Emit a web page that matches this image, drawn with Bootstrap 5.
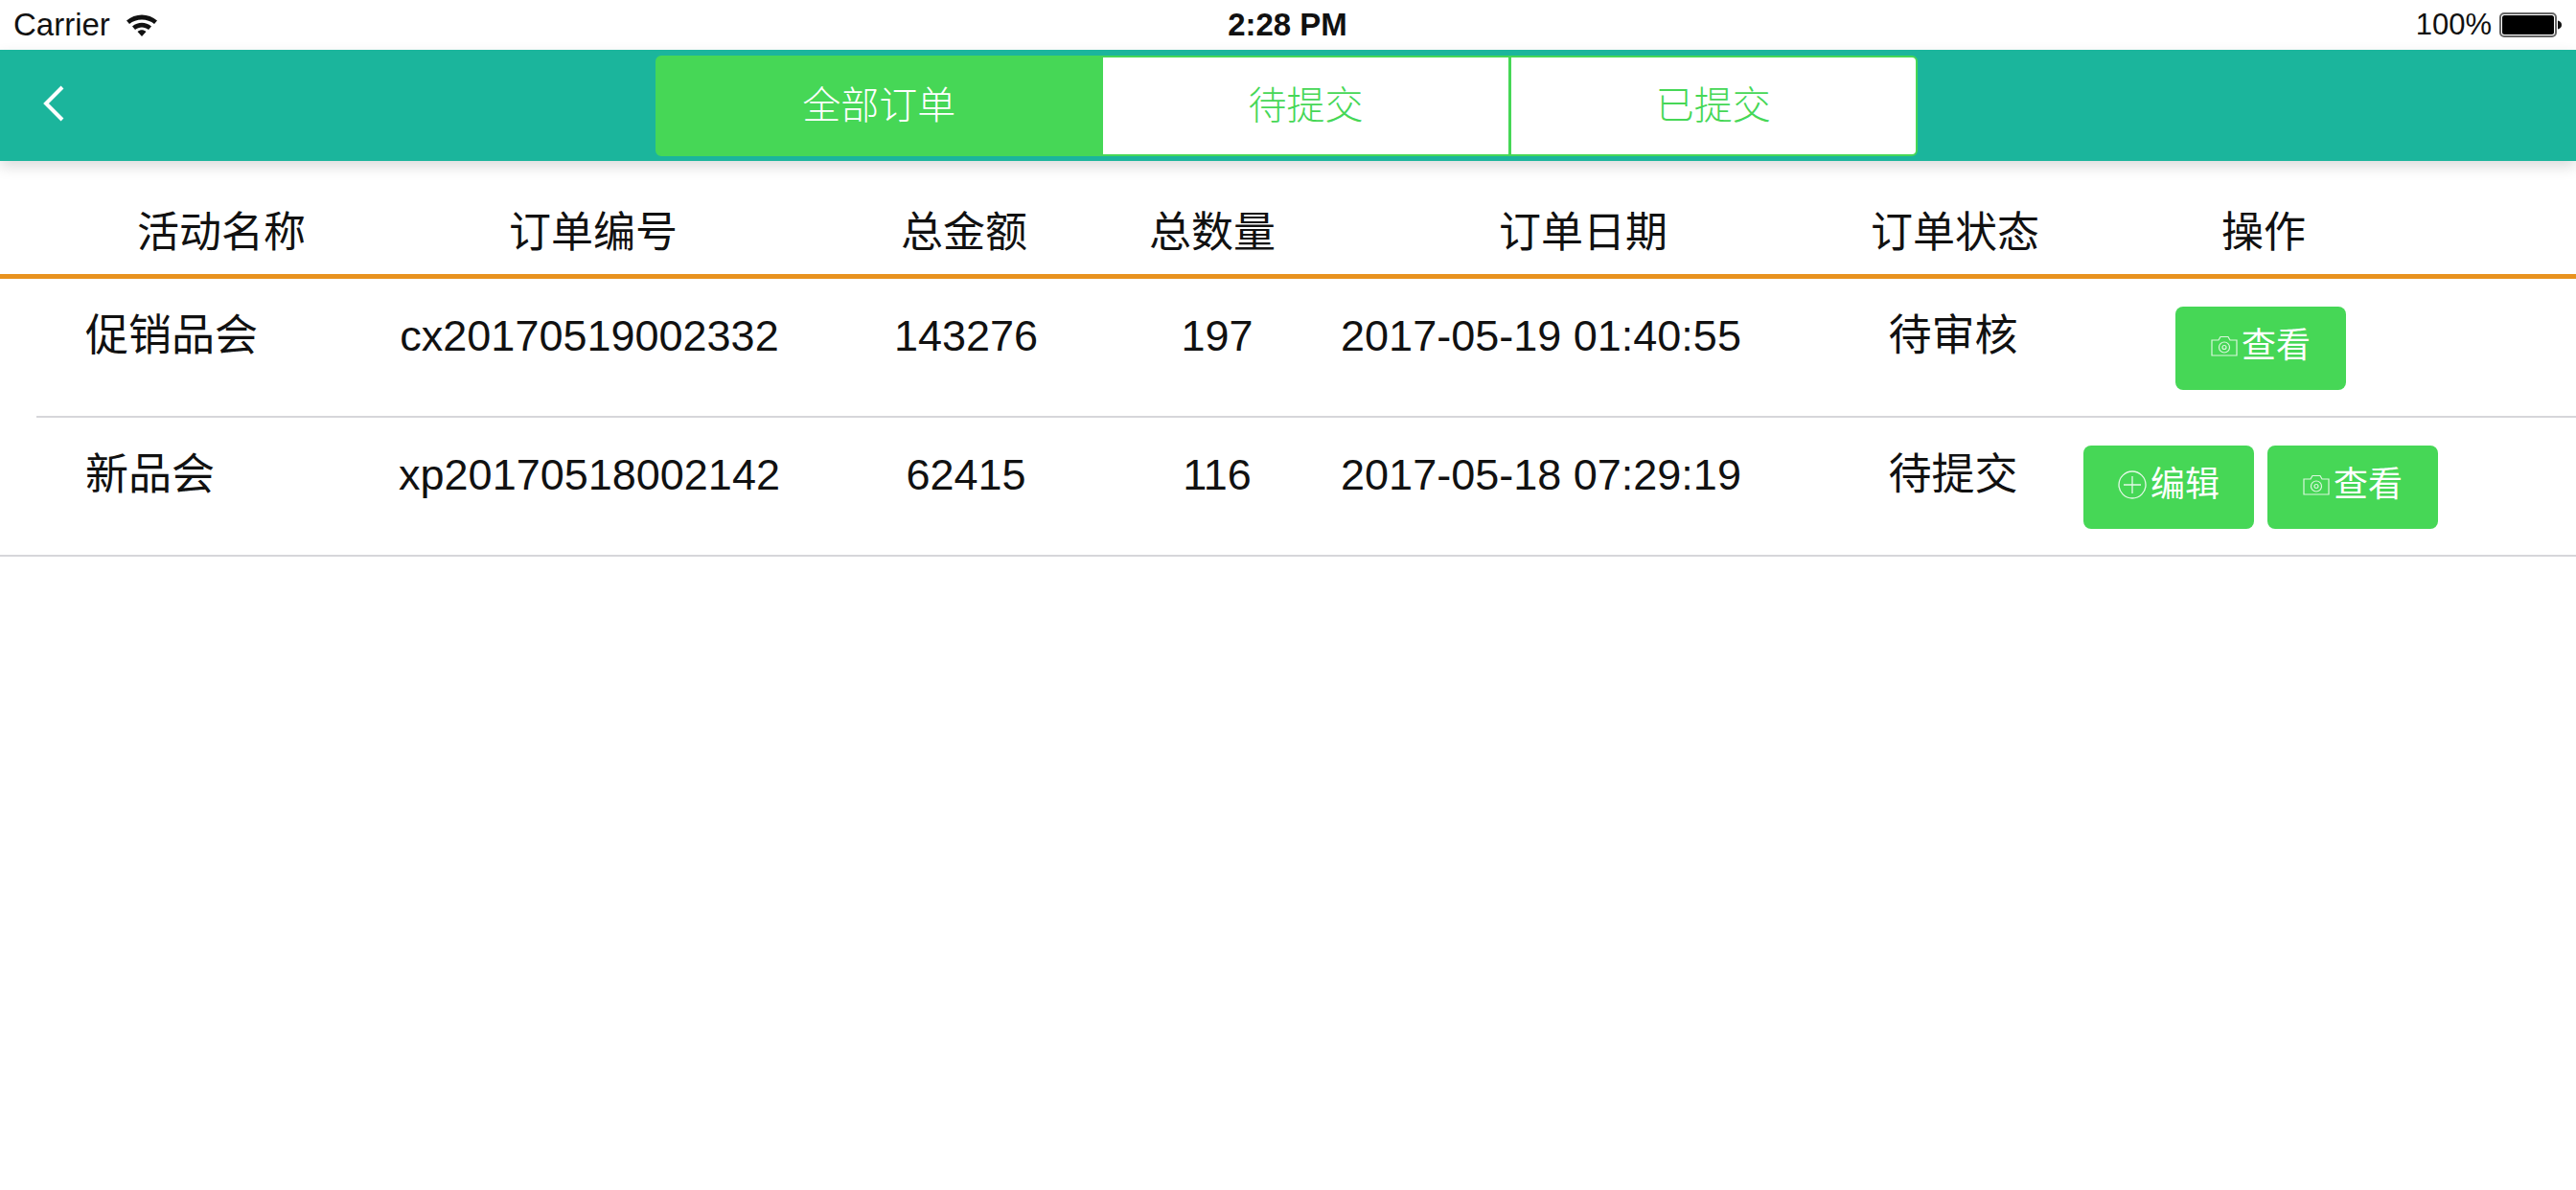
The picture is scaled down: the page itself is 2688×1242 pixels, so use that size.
<!DOCTYPE html>
<html lang="zh">
<head>
  <meta charset="UTF-8">
  <title>订单列表</title>
  <link href="https://cdn.jsdelivr.net/npm/bootstrap@5.3.3/dist/css/bootstrap.min.css" rel="stylesheet">
  <style>
    body { font-family: "Liberation Sans", "Noto Sans CJK SC", sans-serif; color: #111; background: #fff; }
    .status-bar { height: 52px; padding: 0 15px 0 14px; font-size: 31px; }
    .status-side { width: 900px; }
    .carrier-text { font-size: 33px; }
    .status-time { font-weight: 700; font-size: 33px; }
    .top-bar { height: 116px; background: #1bb59c; padding-left: 44px; box-shadow: 0 6px 14px rgba(0,0,0,.14); position: relative; }
    .seg-wrap { margin-left: 616px; width: 1317px; height: 105px; }
    .seg-btn { font-size: 40px; font-weight: 300; color: #46d756; background: #fff; border: 2px solid #46d756; border-radius: 6px; padding: 0; }
    .seg-btn:hover { color: #46d756; background: #fff; border-color: #46d756; }
    .seg-btn.seg-on, .seg-btn.seg-on:hover { background: #46d756; color: #fff; }
    .seg-one { flex: 0 0 466px; }
    .seg-two { flex: 0 0 424px; }
    .seg-three { flex: 0 0 427px; }
    .order-head, .order-row { display: grid; align-items: center; }
    .order-head { height: 123px; padding-top: 32px; padding-left: 90px; font-size: 44px; border-bottom: 5px solid #e8921f; grid-template-columns: 282px 494px 280px 238px 536px 240px 404px; }
    .order-row { height: 145px; font-size: 45px; border-bottom: 2px solid #d6d6da; grid-template-columns: 322px 510px 276px 248px 428px 294px 486px; }
    .order-row.is-inset { margin-left: 38px; }
    .order-row.is-full { padding-left: 38px; }
    .name-cell { padding-left: 51px; }
    .status-cell { padding-left: 138px; }
    .order-row > div { position: relative; top: -12px; }
    .order-row > .ops-cell { top: 1px; gap: 14px; }
    .act-btn { width: 178px; height: 87px; background: #46d756; border: 0; border-radius: 8px; color: #fff; font-size: 36px; padding: 0 0 5px; }
    .act-btn:hover { background: #46d756; color: #fff; }
  </style>
</head>
<body>
  <div class="status-bar d-flex align-items-center justify-content-between">
    <div class="status-side d-flex align-items-center gap-3">
      <span class="carrier-text">Carrier</span>
      <svg width="34" height="26" viewBox="0 0 34 26">
        <path d="M1 8.5C10 .5 24 .5 33 8.5L30 12C23 6 11 6 4 12Z" fill="#111"/>
        <path d="M7 14.5C13 9.5 21 9.5 27 14.5L24 18C20 14.5 14 14.5 10 18Z" fill="#111"/>
        <path d="M12.5 20C15.5 17.5 18.5 17.5 21.5 20L17 25Z" fill="#111"/>
      </svg>
    </div>
    <div class="status-time">2:28 PM</div>
    <div class="status-side d-flex align-items-center justify-content-end gap-2">
      <span>100%</span>
      <svg width="65" height="26" viewBox="0 0 65 26">
        <rect x="1" y="1" width="58" height="24" rx="4" fill="#fff" stroke="#666" stroke-width="2"/>
        <rect x="3" y="3" width="54" height="20" rx="2.5" fill="#000"/>
        <path d="M61 8.5C64 9 65 11 65 13C65 15 64 17 61 17.5Z" fill="#111"/>
      </svg>
    </div>
  </div>

  <div class="top-bar d-flex align-items-center">
    <svg class="mb-1" width="24" height="38" viewBox="0 0 24 38">
      <path d="M21 2L4 19L21 36" fill="none" stroke="#fff" stroke-width="4"/>
    </svg>
    <div class="btn-group seg-wrap" role="group">
      <button type="button" class="btn seg-btn seg-one seg-on">全部订单</button>
      <button type="button" class="btn seg-btn seg-two">待提交</button>
      <button type="button" class="btn seg-btn seg-three">已提交</button>
    </div>
  </div>

  <div class="order-head text-center">
    <div>活动名称</div>
    <div>订单编号</div>
    <div>总金额</div>
    <div>总数量</div>
    <div>订单日期</div>
    <div>订单状态</div>
    <div>操作</div>
  </div>

  <div class="order-row is-inset text-center">
    <div class="name-cell text-start">促销品会</div>
    <div>cx20170519002332</div>
    <div>143276</div>
    <div>197</div>
    <div>2017-05-19 01:40:55</div>
    <div class="status-cell">待审核</div>
    <div class="ops-cell d-flex justify-content-center">
      <button type="button" class="btn act-btn d-flex align-items-center justify-content-center gap-1">
        <svg width="28" height="22" viewBox="0 0 28 22" fill="none" stroke="#fff" stroke-opacity=".8" stroke-width="1.2">
          <path d="M1 5H8L10 1.500H18L20 5H27V21H1Z"/><circle cx="14" cy="12.500" r="5.500"/><circle cx="14" cy="12.500" r="2"/>
        </svg>
        <span>查看</span>
      </button>
    </div>
  </div>

  <div class="order-row is-full text-center">
    <div class="name-cell text-start">新品会</div>
    <div>xp20170518002142</div>
    <div>62415</div>
    <div>116</div>
    <div>2017-05-18 07:29:19</div>
    <div class="status-cell">待提交</div>
    <div class="ops-cell d-flex justify-content-center">
      <button type="button" class="btn act-btn d-flex align-items-center justify-content-center gap-1">
        <svg width="30" height="30" viewBox="0 0 30 30" fill="none" stroke="#fff" stroke-opacity=".85" stroke-width="1.3">
          <circle cx="15" cy="15" r="14"/><path d="M15 6V24M6 15H24"/>
        </svg>
        <span>编辑</span>
      </button>
      <button type="button" class="btn act-btn d-flex align-items-center justify-content-center gap-1">
        <svg width="28" height="22" viewBox="0 0 28 22" fill="none" stroke="#fff" stroke-opacity=".8" stroke-width="1.2">
          <path d="M1 5H8L10 1.500H18L20 5H27V21H1Z"/><circle cx="14" cy="12.500" r="5.500"/><circle cx="14" cy="12.500" r="2"/>
        </svg>
        <span>查看</span>
      </button>
    </div>
  </div>

  <script src="https://cdn.jsdelivr.net/npm/bootstrap@5.3.3/dist/js/bootstrap.bundle.min.js"></script>
</body>
</html>
